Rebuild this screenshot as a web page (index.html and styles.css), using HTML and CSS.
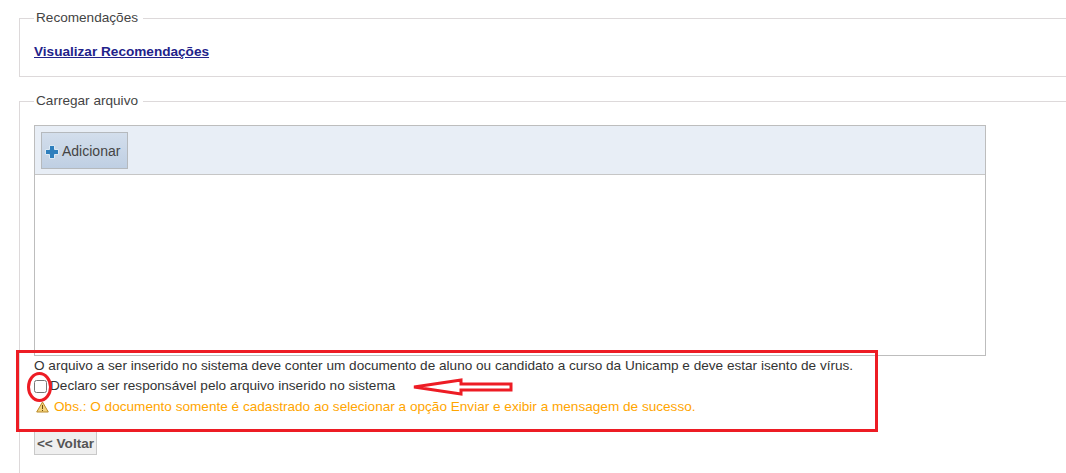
FILE: index.html
```html
<!DOCTYPE html>
<html lang="pt-BR">
<head>
<meta charset="utf-8">
<title>Carregar arquivo</title>
<link rel="stylesheet" href="styles.css">
</head>
<body>
<main class="page">
  <fieldset class="group group-rec">
    <legend class="group-title">Recomendações</legend>
    <a class="rec-link" href="#">Visualizar Recomendações</a>
  </fieldset>
  <fieldset class="group group-file">
    <legend class="group-title">Carregar arquivo</legend>
    <section class="uploader">
      <div class="uploader-bar">
        <button class="add-btn" type="button">
          <svg class="plus" width="14" height="14" viewBox="0 0 14 14"><path d="M4.500 .5h5v4h4v5h-4v4h-5v-4h-4v-5h4z" fill="#2f7fbd" stroke="#dce9f4" stroke-width="1"/></svg>
          <span>Adicionar</span>
        </button>
      </div>
      <div class="uploader-body"></div>
    </section>
    <p class="line">O arquivo a ser inserido no sistema deve conter um documento de aluno ou candidato a curso da Unicamp e deve estar isento de vírus.</p>
    <label class="line check-line"><input class="check" type="checkbox"><span>Declaro ser responsável pelo arquivo inserido no sistema</span></label>
    <p class="line warn">
      <svg class="warn-icon" width="13" height="12" viewBox="0 0 13 12"><path d="M6.500 1 12.300 11H.7z" fill="#f3d27a" stroke="#b98a2a" stroke-width="1"/><path d="M6.500 4v4M6.500 9v1" stroke="#6b4a10" stroke-width="1"/></svg>
      <span>Obs.: O documento somente é cadastrado ao selecionar a opção Enviar e exibir a mensagem de sucesso.</span>
    </p>
    <button class="back-btn" type="button">&lt;&lt; Voltar</button>
  </fieldset>
</main>
<div class="mark-box"></div>
<svg class="mark-svg" width="1066" height="473" viewBox="0 0 1066 473">
  <ellipse cx="39.500" cy="387" rx="11" ry="13.500" fill="none" stroke="#ed1c24" stroke-width="3"/>
  <path d="M414 387 461 380V384H511V390H461V394Z" fill="none" stroke="#ed1c24" stroke-width="3"/>
</svg>
</body>
</html>
```
FILE: styles.css
```css
html, body {
  margin: 0;
  padding: 0;
  height: 473px;
  overflow: hidden;
  background: #fff;
}
body {
  font-family: "Liberation Sans", Arial, sans-serif;
  font-size: 13.6px;
  color: #333;
  position: relative;
}
.page {
  width: 1066px;
  height: 473px;
  padding: 10px 0 0 19px;
  box-sizing: border-box;
  overflow: hidden;
}
.group {
  margin: 0;
  border: 1px solid #ddd9da;
  border-right: 0;
  padding: 0 14px;
  min-width: 0;
}
.group-rec {
  height: 67px;
  box-sizing: border-box;
  margin-bottom: 16px;
  padding-top: 17px;
}
.group-file {
  height: 380px;
  box-sizing: border-box;
  border-bottom: 0;
  padding-top: 16px;
}
.group-title {
  padding: 0 5px 0 2px;
  margin-left: 0;
  font-size: 13.6px;
  line-height: 16px;
  color: #444;
}
.rec-link {
  display: block;
  font-size: 13.6px;
  line-height: 18px;
  font-weight: bold;
  color: #22228a;
  text-decoration: underline;
}
.uploader {
  width: 952px;
  height: 231px;
  box-sizing: border-box;
  border: 1px solid #bdbdbd;
}
.uploader-bar {
  height: 49px;
  box-sizing: border-box;
  background: #e8eef6;
  border-bottom: 1px solid #c6c6c6;
  padding: 6px;
}
.add-btn {
  display: flex;
  align-items: center;
  gap: 3px;
  width: 87px;
  height: 37px;
  box-sizing: border-box;
  padding: 0 0 0 3px;
  border: 1px solid #b5b9bd;
  background: linear-gradient(#d3deec, #bfcfe3);
  font: 14px "Liberation Sans", Arial, sans-serif;
  color: #444;
}
.plus { margin-top: 2px; }
.line {
  margin: 0;
  line-height: 20px;
  height: 20px;
  white-space: nowrap;
}
.check-line {
  display: flex;
  align-items: center;
}
.check {
  width: 13px;
  height: 13px;
  margin: 0 3px 0 0;
}
.warn {
  color: #ffa500;
  display: flex;
  align-items: center;
  gap: 5px;
  padding-left: 2px;
  position: relative;
  top: 1px;
}
.back-btn {
  display: block;
  margin-top: 15px;
  width: 63px;
  height: 24px;
  box-sizing: border-box;
  padding: 0;
  border: 1px solid #c9c9c9;
  background: #efefef;
  font: bold 13.6px "Liberation Sans", Arial, sans-serif;
  color: #555;
}
.mark-box {
  position: absolute;
  left: 16px;
  top: 350px;
  width: 862px;
  height: 82px;
  box-sizing: border-box;
  border: 3px solid #ed1c24;
}
.mark-svg {
  position: absolute;
  left: 0;
  top: 0;
  pointer-events: none;
}
```
